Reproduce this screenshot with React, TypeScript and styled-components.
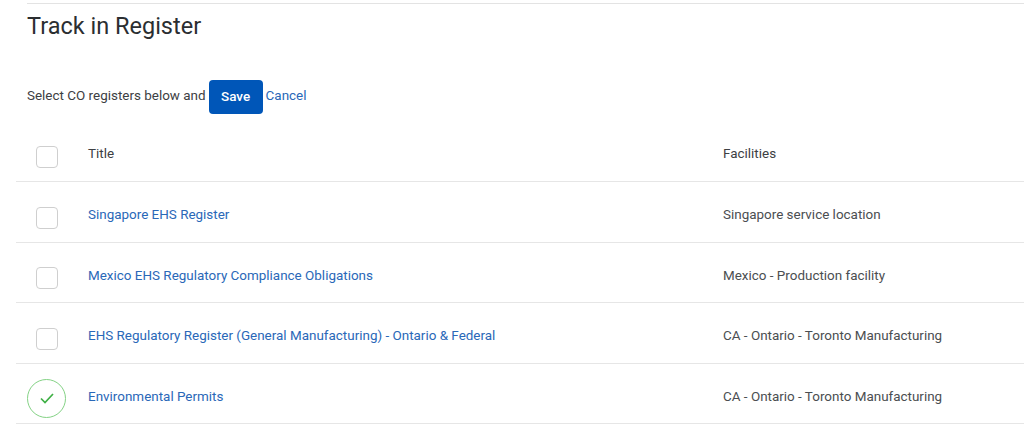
import styled, { createGlobalStyle } from 'styled-components';

const GlobalStyle = createGlobalStyle`
  html, body {
    margin: 0;
    padding: 0;
    background: #fff;
    overflow: hidden;
  }
`;

const Page = styled.main`
  width: 1024px;
  height: 429px;
  padding-top: 3px;
  padding-left: 16px;
  box-sizing: border-box;
  font-family: Roboto, 'Liberation Sans', sans-serif;
  font-size: 13.45px;
  color: #3d4043;
`;

const Header = styled.header`
  margin-left: 11px;
  border-top: 1px solid #e3e3e3;
  height: 76px;
`;

const Title = styled.h1`
  margin: 0;
  padding-top: 8px;
  font-size: 23.5px;
  font-weight: 400;
  line-height: 28px;
  color: #2b2e31;
`;

const Toolbar = styled.div`
  display: flex;
  align-items: flex-start;
  height: 34px;
  margin-left: 11px;
  line-height: 32px;
  white-space: nowrap;
`;

const SaveButton = styled.button`
  width: 54px;
  height: 34px;
  margin: 0 3px;
  padding: 0 0 1px;
  border: none;
  border-radius: 4px;
  background: #0056b8;
  color: #fff;
  font: 500 13.45px Roboto, sans-serif;
`;

const Link = styled.a`
  color: #2a68b8;
  text-decoration: none;
`;

const Row = styled.div<{ $head?: boolean }>`
  display: grid;
  grid-template-columns: 72px 635px 1fr;
  align-items: center;
  height: ${(p) => (p.$head ? '68px' : '60.5px')};
  padding-top: ${(p) => (p.$head ? '12px' : '6px')};
  border-bottom: 1px solid #e6e6e6;
  box-sizing: border-box;
`;

const CheckCell = styled.div<{ $done?: boolean }>`
  display: flex;
  justify-content: center;
  width: 61px;
  margin-top: ${(p) => (p.$done ? '4px' : '6px')};
`;

const Box = styled.span`
  display: block;
  box-sizing: border-box;
  width: 22px;
  height: 22px;
  border: 1px solid #cfcfcf;
  border-radius: 4px;
`;

const Done = styled.span`
  display: flex;
  align-items: center;
  justify-content: center;
  box-sizing: border-box;
  width: 39px;
  height: 39px;
  border: 1.5px solid #84d285;
  border-radius: 50%;
`;

const Facility = styled.span`
  color: #4b4e51;
`;

const rows = [
  ['Singapore EHS Register', 'Singapore service location', false],
  ['Mexico EHS Regulatory Compliance Obligations', 'Mexico - Production facility', false],
  ['EHS Regulatory Register (General Manufacturing) - Ontario & Federal', 'CA - Ontario - Toronto Manufacturing', false],
  ['Environmental Permits', 'CA - Ontario - Toronto Manufacturing', true],
] as const;

export default function App() {
  return (
    <Page>
      <GlobalStyle />
      <Header>
        <Title>Track in Register</Title>
      </Header>
      <Toolbar>
        Select CO registers below and
        <SaveButton>Save</SaveButton>
        <Link href="#">Cancel</Link>
      </Toolbar>
      <Row $head>
        <CheckCell>
          <Box />
        </CheckCell>
        <span>Title</span>
        <span>Facilities</span>
      </Row>
      {rows.map(([title, facility, done]) => (
        <Row key={title}>
          <CheckCell $done={done}>
            {done ? (
              <Done>
                <svg width="14" height="11" viewBox="0 0 14 11" fill="none">
                  <path d="M1 5.5 5 9.5 13 1" stroke="#3fb045" strokeWidth="1.7" />
                </svg>
              </Done>
            ) : (
              <Box />
            )}
          </CheckCell>
          <Link href="#">{title}</Link>
          <Facility>{facility}</Facility>
        </Row>
      ))}
    </Page>
  );
}
